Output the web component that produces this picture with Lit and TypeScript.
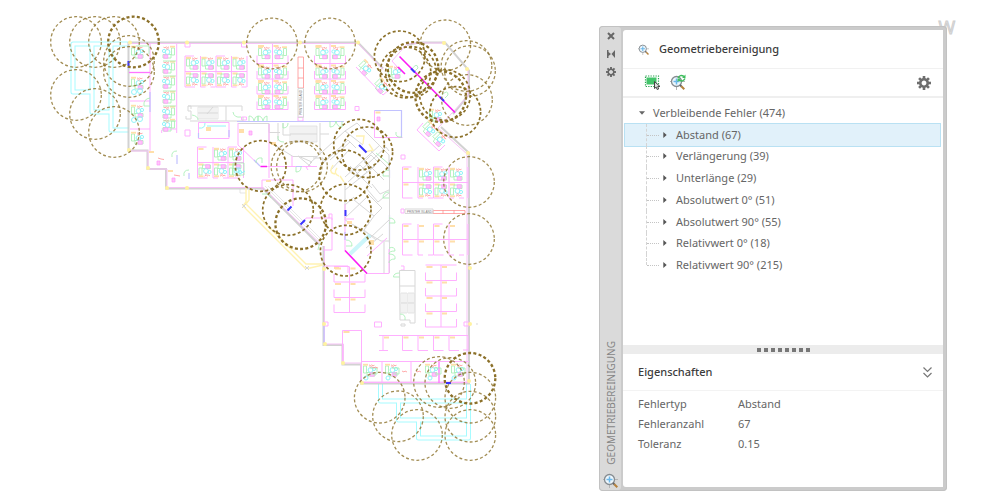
import { LitElement, html, svg, css } from "lit";
import { customElement, property, state } from "lit/decorators.js";

type Weight = "thin" | "mid" | "bold";

/* Error markers: centre x, centre y, line weight */
const MARKERS: [number, number, Weight][] = [
  [76, 42, "thin"], [95, 42, "thin"], [114, 42, "thin"], [133.5, 42, "bold"],
  [129, 61, "thin"], [129, 72, "thin"], [76, 95, "thin"], [95, 114, "thin"], [114, 132, "thin"],
  [272, 43.5, "thin"], [330, 43.5, "thin"],
  [399.7, 56.3, "mid"], [413, 67.5, "bold"], [411, 72, "mid"], [405.5, 72.5, "mid"],
  [440.7, 96.7, "bold"], [445, 95, "mid"], [455.3, 112, "mid"],
  [445.3, 45.3, "thin"], [466.5, 66, "thin"], [470, 71, "thin"], [467, 100, "thin"],
  [469, 182, "thin"], [469, 239, "thin"],
  [260.7, 166, "mid"], [296.5, 166.5, "thin"], [302, 166.5, "thin"],
  [359, 144.7, "mid"], [367.3, 152.3, "mid"], [344.7, 175.5, "mid"],
  [288, 210, "mid"], [300.7, 223.7, "bold"], [345.7, 209.5, "mid"], [345.7, 250.7, "mid"],
  [379.7, 397.7, "thin"], [398, 416.3, "thin"], [417, 435, "thin"],
  [439, 382, "thin"], [450.3, 383, "thin"], [470, 378.3, "bold"],
  [470.3, 397.7, "thin"], [470.3, 416.7, "thin"], [470.3, 435, "thin"],
];

const path = (cls: string, d: string) => svg`<path class=${cls} d=${d}></path>`;

/* One furnished workplace, 15 units wide; flip mirrors it across the spine */
const desk = (x: number, y: number, flipY = false, flipX = false) => svg`
  <g transform="translate(${x} ${y}) scale(${flipX ? -1 : 1} ${flipY ? -1 : 1})">
    <path class="green" d="M1.5 3h3v7h-3zM5 9.5h8v3.5h-8z"></path>
    <circle class="cyan" cx="8.5" cy="7" r="2.4"></circle>
    <circle class="cyan" cx="12" cy="6" r="1.6"></circle>
    <path class="chair" d="M8.2 9.8h4v3.4h-4z"></path>
    <path class="red" d="M7 1.8l1.5 1 1-1 1.5 1 1.5-.6M7.5 3.6l1 .6 1.4-.6"></path>
    <path class="tag" d="M1 .8h5v1.8h-5z"></path>
  </g>`;

/* Cubicles on both sides of a horizontal spine */
const rowBlock = (xs: number[], y: number, furnished: number[]) => svg`
  ${path("mag", `M${xs[0]} ${y}H${xs[xs.length - 1]}`)}
  ${xs.map((x) => path("mag", `M${x} ${y - 15.5}v31`))}
  ${xs.slice(0, -1).map((x, i) => svg`
    ${path("mag", i % 2 ? `M${x} ${y + 15.5}h5m5 0h5` : `M${x} ${y + 15.5}h10M${x} ${y - 15.5}h9`)}
    ${path("tag", `M${x + 1} ${y + 1}h5v2h-5zM${x + 1} ${y - 14.5}h5v2h-5z`)}
    ${furnished.includes(i) ? svg`${desk(x, y - 15.5)}${desk(x, y + 15.5, true)}` : null}`)}`;

/* Cubicles on both sides of a vertical spine */
const columnBlock = (x: number, ys: number[], furnished: boolean) => svg`
  ${path("mag", `M${x} ${ys[0]}V${ys[ys.length - 1]}`)}
  ${ys.slice(1).map((y) => path("mag", `M${x - 15.5} ${y}h31m0 0v-8m-31 8v-8`))}
  ${ys.slice(0, -1).map((y) => svg`
    ${path("tag", `M${x - 14.5} ${y + 1}h6v2h-6zM${x + 1} ${y + 1}h5v2h-5z`)}
    ${furnished ? svg`${desk(x - 15.5, y + 1.5)}${desk(x + 15.5, y + 1.5, false, true)}` : null}`)}`;

const stairs = (x: number, y: number, w: number, h: number) => {
  let d = `M${x} ${y}h${w}v${h}h${-w}z`;
  for (let i = 2; i < w; i += 2) d += `M${x + i} ${y}v${h}`;
  return svg`${path("gray fine", d)}${path("gray", `M${x} ${y + h / 2}h${w}`)}`;
};

const PIPES = [
  "M128 44H73v48h20", "M92 44v68h20", "M111 44v86h18",
  "M380.5 384v17h89", "M398.5 402v18h70", "M418.5 421v17h50V384",
];

@customElement("floor-plan")
export class FloorPlan extends LitElement {
  static styles = css`
    :host { display: block; }
    svg { display: block; width: 100%; height: auto; }
    path, circle { fill: none; }
    .plan { opacity: 0.8; }
    .gray { stroke: #cfcfcf; stroke-width: 1; }
    .fine { stroke-width: 0.6; }
    .wall { stroke: #c8c8c8; stroke-width: 2; }
    .mag { stroke: #ff9dff; stroke-width: 1; }
    .wall-line { stroke: #f5b5f5; stroke-width: 1; }
    .hot { stroke: #fb1cf5; stroke-width: 1.6; }
    .warm { stroke: #ff52ff; stroke-width: 1.3; }
    .blue { stroke: #3a36ff; stroke-width: 2; }
    .pale-blue { stroke: #b3b3ff; stroke-width: 1.2; }
    .green { stroke: #8eeba0; stroke-width: 0.8; }
    .cyan { stroke: #78f2f8; stroke-width: 1; }
    .chair { stroke: #ff7dfa; stroke-width: 0.7; fill: #ffb8fa; }
    .red { stroke: #ff7a7a; stroke-width: 0.8; }
    .tag { fill: #ffd896; }
    .yellow { stroke: #fff0a0; stroke-width: 1.4; }
    .node { fill: #fff08a; }
    .ice { stroke: #c0f4fa; stroke-width: 4; }
    .pipe-out { stroke: #a6fbff; stroke-width: 5; stroke-linejoin: round; }
    .pipe-in { stroke: #fff; stroke-width: 3; stroke-linejoin: round; }
    .label { font: 3px "Liberation Sans", sans-serif; fill: #555; }
    .thin, .mid, .bold { stroke: #8b7029; stroke-dasharray: 3 2.3; }
    .thin { stroke-width: 1.3; opacity: 0.8; }
    .mid { stroke-width: 1.7; }
    .bold { stroke-width: 2.3; }
  `;

  render() {
    return html`
      <svg viewBox="0 0 599 500" role="img" aria-label="Grundriss mit markierten Fehlern">
        ${PIPES.map((d) => path("pipe-out", d))}
        ${PIPES.map((d) => path("pipe-in", d))}

        <g class="plan">
        ${path("wall", "M128.500 42.500H358l25 26M407 45l12-2.500h26l24 28v26M467 97l-14 17M441 127l28 26V383M128.500 42v108.500h19V169h18.500v19.500h97l56 56M323.500 246v99h19v19.500H361v19h109")}
        ${path("wall-line", "M128 43.500H358l25 26M392 61l15-17 12-1h26M468 70v26l-30 32 29 26V382M130 151h18v18h19v18.500h96l57 56M324.500 246v98h19v19H361v19h108")}

        ${path("mag", "M150 43v108M130 101h20M130 129h20M161.700 130v3M161.700 129h15M176.700 44v89")}
        ${path("warm", "M129 72.500h21")}
        ${path("pale-blue", "M128.500 60v10M150 92v20M177 155v9M189 173v6")}
        ${[45, 76, 104, 131].map((y) => desk(130, y))}
        ${[88, 116].map((y) => svg`<circle class="cyan" cx="134" cy=${y + 4} r="2.500"></circle><circle class="cyan" cx="140" cy=${y + 3} r="2.500"></circle>`)}
        ${[45, 60, 75, 90, 105, 118].map((y) => desk(176, y, false, true))}
        ${path("green", "M163 61h13M163 76h13M163 91h13M163 106h13M163 121h13M150 98q-7 1-6 8h6M136 46h13v8M177 151q-6 0-5 6M189 170q-6 0-5 6")}

        ${rowBlock([185, 200.5, 216, 231.5, 247], 71.5, [0, 1, 2, 3])}
        ${rowBlock([197.5, 213, 228, 243.5], 162.5, [1, 2])}
        ${desk(197.5, 178, true)}
        ${columnBlock(272.5, [44, 63.5, 79, 94, 109.5], true)}
        ${columnBlock(330, [44, 63.5, 79, 94, 109.5], true)}
        ${rowBlock([402.5, 418, 433.5, 449, 468], 182.5, [1, 2, 3])}
        ${rowBlock([402.5, 418, 433.5, 449, 468], 239.5, [])}
        ${columnBlock(441, [265, 280.5, 296, 311.5, 327], false)}
        ${columnBlock(349.5, [266.5, 282, 297.5, 312.5], false)}
        ${path("mag", "M425.500 265h31M334 266.500h15M379 335.500h89v15M383 335.500v15h-4m4 0h5M402.500 335.500v15h10M418 335.500v15h10M433.500 335.500v15h10M449 335.500v15h10M468 350h-5")}
        ${[384, 403.5, 419, 434.5, 450].map((x) => path("tag", `M${x} 336.500h5v2h-5z`))}

        ${path("mag", "M361 361.500h108M361.500 330.500v52M342.500 330.500h19M342.500 330.500V364M382 362v21M411 362v21M361 382.500h109")}
        ${path("warm", "M439 362v21")}
        ${[362, 384, 424, 450].map((x) => desk(x, 363))}
        ${[366, 388, 430, 454].map((x) => svg`<circle class="cyan" cx=${x} cy="378" r="2"></circle><path class="green" d="M${x + 4} 368h7v6h-6"></path>`)}
        ${path("red", "M372 367l2 1 1-1 3 1M402 371l2 1 1-1 2 1M416 371l2 1 1-1 2 1")}

        ${path("mag", "M185 43v4h5v-4M241.500 43v4h5v-4M185 130h5v6h-5zM241.500 117h5v3h-5zM355 106.500h4v4h-4zM401 155h4v4h-4zM401 209h3v4h-3zM374.500 322h7v5h-7zM401 266h3v4h-3M325 322h3v4h-3M298 117h5v4h-5zM464 322h5v4h-5z")}
        ${path("mag", "M198.500 122.500h30.500v16h-30.500z")}
        ${path("pale-blue", "M229 130v7M198.500 133v5")}
        ${path("cyan fine", "M199 128q6 1 6-5M207 126h19")}
        ${path("tag", "M206 127h5v4h-5z M149 151h5v2h-5zM168 170h5v2h-5zM343.500 331h6v2h-6z")}
        ${path("red", "M158 158l3 1 3 .5M174 175l3 .5 3 .5")}
        ${path("chair", "M157 161h3v4h-3zM172 178h3v4h-3z")}

        ${path("gray", "M188 106h3v3M188 106h54v5M188 106v5h3v8h-5v-3M190 121h53v-4M226 106v15")}
        ${stairs(198, 107, 20, 12)}
        ${path("gray", "M207 114l6-7")}
        ${path("gray", "M399.500 270.500h15.500v52.500h-5v-3h-10zM399.500 286h15.500M401 324h4v2h-4z")}
        ${stairs(401, 293, 6, 20)}${stairs(408, 293, 6, 20)}
        ${path("green", "M399.500 273q-6 0-6 4h6M400 314q6 0 5 6M192 115q6 1 6 5M233 112q1 6 8 5")}

        ${path("red", "M298 57h5.500v31h-5.500zM298 68h5.500M298 78h5.500M433 210.500h32v3h-32zM443 210v4M454 210v4")}
        ${path("gray", "M298 88.500h5.500v29h-5.500zM405 209h28v4.500h-28z")}
        <text class="label" transform="translate(302 115) rotate(-90)">PRINTER ISLAND</text>
        <text class="label" x="407" y="212.500">PRINTER ISLAND</text>

        ${path("pale-blue", "M237 121.500h107M389.500 170v8M389.500 215v28M324 325v18")}
        ${path("gray", "M238 123.500h31v9h11M269 123.500v18l24 15h24M278 123v18M283 123v12h8M320 123v32M329 134h-9M310 163l35-32 18 14M320 166l28-26 8 8M345 131l12-8 32 32v16M330 160l20-18")}
        ${stairs(290, 126, 27, 16)}
        ${path("gray", "M310 166l-12-10 14 6-4 4zM313 158h10v6M330 171l18-20M345 177l35-32M348 182l38-35 3 4M345 190l30-24M350 166l22 22M360 156l24 24M370 150l19 19M352 172l8-7 7 7-8 7zM364 162l7-7 7 7-7 7z")}
        ${path("gray", "M389.500 160v113M345 182v38l36 21h8M345 218l22-21M354 200l20 16 8-8-14-14M374 216l-10 14 12 10M370 238l19-18M366 248l17-14M384 242v31M366 188l12 14 11-9M372 184l8 10 9-4M345 205l9-8")}
        ${path("gray fine", "M265 186l54 54M268 186l52 52M263 190l54 54M240 189v4h6")}
        ${path("mag", "M238 123v22M269 124v54M238 145l22.500 21.500M267 166.500h50M292 156v10M262 190v-10h31M293 180v26M306 218h26v32h-9M332 220v-6h-3v4M345 204v47M366 273.500h23V249M345 219h9M367 256l20-18M324 266h24v7M374.500 110.500v27h28M306 218l-3 5M308 170l-2-3 5-1")}
        ${path("pale-blue", "M374.500 110.500h27v27M254 160l6 6M296 166.500h6M345 232v8")}
        ${path("ice", "M350 254l20-19")}
        ${path("green", "M249 121v-5q4 0 5 5q1-5 4-5v5M258 121v-5q4 0 5 5q1-5 4-5v5M283 123v5q5 0 5-5M330 121v6q5 0 6-6q1 6 6 6v-6M278 136q-1 6 6 6M256 163q0-6 6-5v5M296 167v5q5 0 5-5M233 163h11v12h-11zM389 170q-6 0-6 6h6M389 192q-6 0-6 6h6M389 218q6 0 6 5h-6M389 248q6-2 6 3-6 0-6 3 7 0 6 5-6 0-6 4M346 240q6 0 6 6h-6M262 194h6l3 4M402 137q-7 1-6-5M376 153l14 12M318 250q1-8 5-8")}
        ${path("cyan", "M236 168h4v4h-4zM240 174l5-3")}
        ${path("chair", "M249 131h3v4h-3zM377 117h3v4h-3z")}
        ${path("tag", "M239 129h5v4h-5zM266 180h5v2h-5zM347 221h5v3h-5zM369 240h5v5h-5zM375.500 111.500h5v2h-5zM271 142h5v3h-5zM334 267h5v2h-5z")}

        ${path("yellow", "M246 188v14l-3 4 62 62h5l13-3M249 190v10l-3 4 60 60h16M356 136h8l-1 8M365 152l8-2-4-6M333 165q-5 8 2 9M337 168q-4 6 2 8M340 176l4 6")}
        ${path("gray", "M242 204l4 4m0-4l-4 4M305 266l4 4m0-4l-4 4")}

        ${[[362, 66], [378, 84], [426, 127], [436, 137]].map(([x, y]) => svg`<g transform="rotate(45 ${x} ${y})">${desk(x - 4, y - 8)}</g>`)}
        ${path("mag", "M356 67l27 28 7-6M417 130l22 21 6-6M417 130l6-7M392 61l8 9")}
        ${desk(387, 65)}${desk(428, 108)}
        ${path("green", "M412 69q5-7 6-1l-3 3M442 95q6-6 6 0l-3 3")}
        ${[[130, 42.5], [187, 42.5], [244, 42.5], [300, 42.5], [358, 42.5], [444, 43], [467, 69], [468, 153], [129, 150], [148, 168], [167, 188], [187, 188], [324, 269], [324, 324], [325, 344], [343, 363], [362, 383], [470, 324], [470, 268], [469, 381]].map(
          ([x, y]) => svg`<circle class="node" cx=${x} cy=${y} r="2"></circle>`,
        )}
        </g>

        ${path("hot", "M399.500 56.500l55.500 56M398 67l7 7M260.500 166.500h6.500M345 250.500l22 23")}
        ${path("blue", "M411 68.500l4 4M440 97l4 4M359 145l7.500 7.500M287.500 210.500l4-4M300.500 224.500l4.500-4.500M345.500 210v6")}
        ${path("blue fine", "M446 383h5M128.500 61v5")}

        ${MARKERS.map(([x, y, w]) => svg`<circle class=${w} cx=${x} cy=${y} r="25.300"></circle>`)}
        <circle class="gray" cx="477" cy="324" r="0.300"></circle>
      </svg>`;
  }
}

const gearTeeth = (count: number) =>
  Array.from({ length: count }, (_, i) => svg`<rect x="-1.300" y="-7" width="2.600" height="4" transform="rotate(${(360 / count) * i})"></rect>`);

const lens = (refresh = false) => svg`
  <path d="M0 6.500h3M12 6.500h3M6.500 12v3" stroke="#b5b5b5" fill="none"></path>
  <circle cx="6.500" cy="6.500" r="5" fill="#eef7fd" stroke="#858c91" stroke-width="1.300"></circle>
  <path d="M6.500 3.500v6M3.500 6.500h6" stroke="#6cb8ea" stroke-width="1.500"></path>
  <path d="M10 10l1.500 1.500" stroke="#666" stroke-width="1.800"></path>
  <path d="M11.300 11.300l3 3" stroke="#b5813c" stroke-width="2"></path>
  ${refresh
    ? svg`<path d="M8 3q2-4 6-1.500M15 3.500q-2 4-6 1.500" fill="none" stroke="#3fbd5e" stroke-width="1.500"></path>
      <path d="M12 3h3.500V-.5zM11 3.500H7.500V7z" fill="#3fbd5e"></path>`
    : null}`;

@customElement("cleanup-palette")
export class CleanupPalette extends LitElement {
  @property({ attribute: false }) errors: [string, number][] = [];
  @property({ type: Number }) total = 0;
  @state() private selected = 0;

  static styles = css`
    :host {
      display: block;
      position: relative;
      color: #666;
      font: 11px/16px "Noto Sans", sans-serif;
    }
    button {
      display: flex;
      align-items: center;
      border: 0;
      padding: 0;
      background: none;
      color: inherit;
      font: inherit;
      text-align: left;
    }
    svg { display: block; overflow: visible; }
    h2, h3, ul, dl, dd { margin: 0; padding: 0; }
    ul { list-style: none; }
    .watermark {
      position: absolute;
      top: -13px;
      right: -8px;
      color: #e6e6e6;
      -webkit-text-stroke: 1px #cfcfcf;
      font: 400 18px/28px "Open Sans", sans-serif;
    }
    .frame {
      position: relative;
      display: grid;
      grid-template-columns: 24px minmax(0, 1fr);
      box-sizing: border-box;
      padding: 4px 4px 4px 0;
      border-radius: 4px;
      background: #cbcbcb;
      box-shadow: inset 0 0 0 1px #c2c2c2;
    }
    .rail {
      display: flex;
      flex-direction: column;
      align-items: center;
      gap: 6px;
      margin: -3px 2px -3px 1px;
      padding: 3px 0 2px;
      border-radius: 3px;
      background: #dadada;
      color: #666;
    }
    .rail button { width: 12px; height: 12px; justify-content: center; }
    .caption {
      margin-top: auto;
      margin-bottom: 2px;
      writing-mode: vertical-rl;
      transform: rotate(180deg);
      color: #858585;
      font-size: 10px;
      line-height: 16px;
    }
    .body { border-radius: 3px 0 0 3px; background: #fff; }
    .title {
      display: flex;
      align-items: center;
      gap: 10px;
      height: 38px;
      padding-left: 15px;
      border-bottom: 1px solid #f1f1f1;
    }
    h2, h3 { color: #3c3c3c; font-size: 11px; line-height: 16px; font-weight: 500; }
    .toolbar {
      display: flex;
      align-items: center;
      gap: 10px;
      height: 27px;
      padding: 0 12px 0 22px;
      border-bottom: 2px solid #efefef;
    }
    .toolbar .settings { margin-left: auto; color: #6e6e6e; }
    .tree {
      display: grid;
      grid-template-rows: repeat(8, 1fr);
      height: 174px;
      margin: 4px 2px 69px 1px;
    }
    .node { display: flex; align-items: stretch; }
    .node button { flex: 1; border: 1px solid transparent; }
    .root button { gap: 8px; padding-left: 14px; }
    .leaf { position: relative; }
    .leaf button { gap: 9px; padding-left: 38px; }
    .leaf button.active { margin: -1px 0; border-color: #b9e1f3; background: #e1f1fa; }
    .guide {
      position: absolute;
      left: 22px;
      top: 0;
      bottom: 0;
      width: 12px;
      pointer-events: none;
      border-left: 1px dashed #d4d4d4;
    }
    .guide::after {
      content: "";
      position: absolute;
      top: 50%;
      left: 0;
      width: 12px;
      border-top: 1px dotted #c4c4c4;
    }
    .leaf:last-child .guide { bottom: 50%; }
    .leaf:last-child .guide::after { top: 100%; }
    .splitter {
      display: flex;
      align-items: center;
      justify-content: center;
      gap: 3px;
      height: 9px;
      background: #ececec;
    }
    .dot { width: 4px; height: 4px; background: #777; }
    .section {
      display: flex;
      align-items: center;
      justify-content: space-between;
      height: 36px;
      padding: 0 11px 0 15px;
      border-bottom: 1px solid #f3f3f3;
    }
    .props {
      display: grid;
      grid-template-columns: 100px 1fr;
      grid-auto-rows: 20px;
      align-items: center;
      padding: 3px 15px 33px;
    }
  `;

  render() {
    return html`
      <div class="watermark" aria-hidden="true">W</div>
      <section class="frame">
        <div class="rail">
          <button aria-label="Schließen">
            <svg width="8" height="8" viewBox="0 0 8 8"><path d="M1 1l6 6M7 1L1 7" stroke="currentColor" stroke-width="2"></path></svg>
          </button>
          <button aria-label="Automatisch ausblenden">
            <svg width="8" height="8" viewBox="0 0 8 8" fill="currentColor"><path d="M0 0h1.500v8H0zM1.500 2L4 4 1.500 6zM8 0v8L4.500 4z"></path></svg>
          </button>
          <button aria-label="Eigenschaften der Palette">
            <svg width="10" height="10" viewBox="-7 -7 14 14" fill="currentColor">
              ${gearTeeth(8)}<circle r="3.900" fill="none" stroke="currentColor" stroke-width="2"></circle>
            </svg>
          </button>
          <span class="caption">GEOMETRIEBEREINIGUNG</span>
          <svg width="15" height="15" viewBox="0 0 15 15">${lens()}</svg>
        </div>
        <div class="body">
          <header class="title">
            <svg width="11" height="11" viewBox="0 0 15 15">${lens()}</svg>
            <h2>Geometriebereinigung</h2>
          </header>
          <div class="toolbar">
            <button aria-label="Objekte auswählen">
              <svg width="15" height="15" viewBox="0 0 15 15">
                <path d="M1.500 2.500h10v7h-10z" fill="#43c46a"></path>
                <path d="M.5 1h13v10.500H.5z" fill="none" stroke="#2da653" stroke-width="1.200" stroke-dasharray="1.300 1.200"></path>
                <path d="M9.500 6.500v7l1.700-1.400 1 2.400 1.500-.6-1-2.300 2.300-.1z" fill="#ddd" stroke="#444" stroke-width="1"></path>
              </svg>
            </button>
            <button aria-label="Erneut prüfen"><svg width="15" height="15" viewBox="0 0 15 15">${lens(true)}</svg></button>
            <button class="settings" aria-label="Einstellungen">
              <svg width="14" height="14" viewBox="-7 -7 14 14" fill="currentColor">
                ${gearTeeth(8)}<circle r="3.700" fill="none" stroke="currentColor" stroke-width="2.600"></circle>
              </svg>
            </button>
          </div>
          <ul class="tree">
            <li class="node root">
              <button aria-expanded="true">
                <svg width="6" height="4" viewBox="0 0 7 4"><path d="M0 0h7L3.500 4z" fill="#666"></path></svg>
                Verbleibende Fehler (${this.total})
              </button>
            </li>
            ${this.errors.map(([name, count], i) => html`
              <li class="node leaf">
                <button class=${i === this.selected ? "active" : ""} aria-expanded="false" @click=${() => (this.selected = i)}>
                  <svg width="4" height="6" viewBox="0 0 4 7"><path d="M0 0v7l4-3.500z" fill="#555"></path></svg>
                  ${name} (${count})
                </button>
                <span class="guide"></span>
              </li>`)}
          </ul>
          <div class="splitter">${Array.from({ length: 8 }, () => html`<span class="dot"></span>`)}</div>
          <header class="section">
            <h3>Eigenschaften</h3>
            <button aria-label="Eigenschaften einklappen">
              <svg width="9" height="11" viewBox="0 0 9 11"><path d="M.5 .5l4 4 4-4M.5 6l4 4 4-4" fill="none" stroke="#777" stroke-width="1.200"></path></svg>
            </button>
          </header>
          <dl class="props">
            <dt>Fehlertyp</dt><dd>${this.errors[this.selected]?.[0]}</dd>
            <dt>Fehleranzahl</dt><dd>${this.errors[this.selected]?.[1]}</dd>
            <dt>Toleranz</dt><dd>0.15</dd>
          </dl>
        </div>
      </section>`;
  }
}

@customElement("app-root")
export class AppRoot extends LitElement {
  static styles = css`
    :host { display: block; min-height: 100vh; background: #fff; }
    .page {
      display: grid;
      grid-template-columns: minmax(0, 1fr) 348px;
      align-items: start;
      padding-right: 53px;
    }
    cleanup-palette { margin-top: 26px; }
  `;

  private errors: [string, number][] = [
    ["Abstand", 67], ["Verlängerung", 39], ["Unterlänge", 29],
    ["Absolutwert 0°", 51], ["Absolutwert 90°", 55],
    ["Relativwert 0°", 18], ["Relativwert 90°", 215],
  ];

  render() {
    return html`
      <main class="page">
        <floor-plan></floor-plan>
        <cleanup-palette .errors=${this.errors} .total=${474}></cleanup-palette>
      </main>`;
  }
}
